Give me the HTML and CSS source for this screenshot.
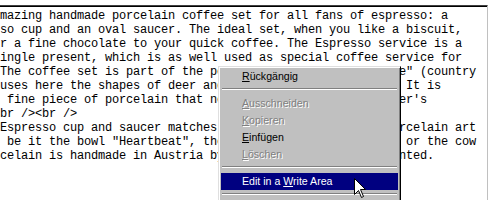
FILE: index.html
```html
<!DOCTYPE html>
<html>
<head>
<meta charset="utf-8">
<link rel="stylesheet" href="styles.css">
</head>
<body>
<div class="editor">
  <div class="text">
    <div class="line">mazing handmade porcelain coffee set for all fans of espresso: a</div>
    <div class="line">so cup and an oval saucer. The ideal set, when you like a biscuit,</div>
    <div class="line">r a fine chocolate to your quick coffee. The Espresso service is a</div>
    <div class="line">ingle present, which is as well used as special coffee service for</div>
    <div class="line">The coffee set is part of the porcelain line "Countrystyle" (country</div>
    <div class="line">uses here the shapes of deer and cows in a very nice way. It is</div>
    <div class="line"> fine piece of porcelain that no one should miss in a lover's</div>
    <div class="line">br /&gt;&lt;br /&gt;</div>
    <div class="line">Espresso cup and saucer matches all other items of the porcelain art</div>
    <div class="line"> be it the bowl "Heartbeat", the plate "Hearts", the vase or the cow</div>
    <div class="line">celain is handmade in Austria by the manufacturer and painted.</div>
  </div>
</div>

<div class="menu">
  <div class="item"><u>R</u>ückgängig</div>
  <div class="sep"></div>
  <div class="item disabled"><u>A</u>usschneiden</div>
  <div class="item disabled"><u>K</u>opieren</div>
  <div class="item"><u>E</u>infügen</div>
  <div class="item disabled"><u>L</u>öschen</div>
  <div class="sep"></div>
  <div class="item active">Edit in a <u>W</u>rite Area</div>
  <div class="sep"></div>
</div>

<svg class="cursor" width="13" height="21" viewBox="0 0 13 21">
  <path d="M0.5 0.5 L0.5 16.5 L4.5 12.5 L7.5 19.5 L9.5 18.5 L6.5 11.5 L11.5 11.5 Z" fill="#fff" stroke="#000" stroke-width="1"/>
</svg>
</body>
</html>
```
FILE: styles.css
```css
html, body {
  margin: 0;
  padding: 0;
  background: #fff;
  width: 500px;
  height: 200px;
  overflow: hidden;
}

.editor {
  margin-top: 5px;
  width: 488px;
  height: 195px;
  border-top: 1px solid #404040;
  border-right: 1px solid #c0c0c0;
  box-sizing: border-box;
  overflow: hidden;
}

.text {
  border-top: 1px solid #000;
  padding-top: 2px;
  font-family: "Liberation Mono", "Courier New", monospace;
  font-size: 12px;
  letter-spacing: -0.2px;
  line-height: 14px;
  color: #000;
}

.line {
  white-space: pre;
  height: 14px;
}

.menu {
  position: absolute;
  left: 218px;
  top: 66px;
  width: 183px;
  height: 134px;
  box-sizing: border-box;
  background: #c0c0c0;
  border: 1px solid;
  border-bottom: 0;
  border-color: #dfdfdf #000 #000 #dfdfdf;
  box-shadow: inset 1px 1px #fff, inset -1px 0 #808080;
  padding: 1px 2px 0 2px;
  font-family: "Liberation Sans", Arial, sans-serif;
  font-size: 10.6px;
  color: #000;
  overflow: hidden;
}

.item {
  height: 17px;
  line-height: 17px;
  padding-left: 21px;
  white-space: nowrap;
}

.item.disabled {
  color: #808080;
  text-shadow: 1px 1px #fff;
}

.item.active {
  background: #000080;
  color: #fff;
}

.sep {
  height: 10px;
  box-sizing: border-box;
  padding-top: 3px;
}

.sep::before {
  content: "";
  display: block;
  height: 1px;
  background: #808080;
  border-bottom: 1px solid #fff;
  margin: 0 1px;
}

.cursor {
  position: absolute;
  left: 354px;
  top: 178px;
}
```
